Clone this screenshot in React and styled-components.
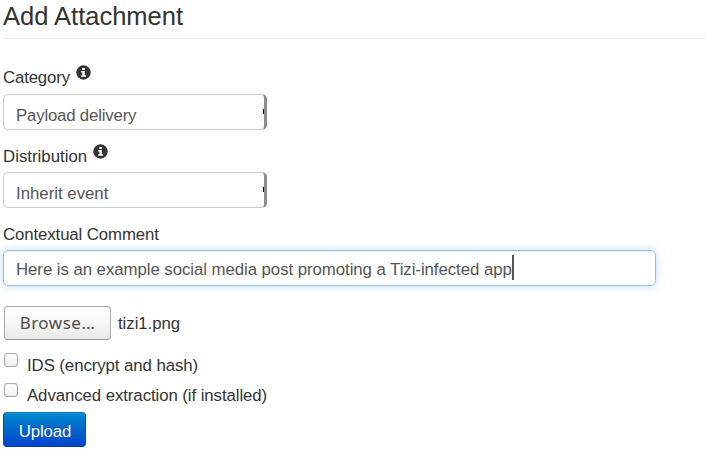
import React from "react";
import styled, { createGlobalStyle } from "styled-components";

const GlobalStyle = createGlobalStyle`
  * { box-sizing: border-box; }
  body { margin: 0; background: #fff; overflow: hidden; }
`;

const Page = styled.form`
  display: flex;
  flex-direction: column;
  align-items: flex-start;
  height: 471px;
  padding-left: 3px;
  font-family: "Liberation Sans", Arial, sans-serif;
  font-size: 16.8px;
  line-height: 24px;
  letter-spacing: -0.05px;
  color: #333;
  white-space: nowrap;
`;

const Legend = styled.h1`
  width: 100%;
  height: 39px;
  margin: 0 0 26px;
  border-bottom: 1px solid #e5e5e5;
  font-size: 25.5px;
  font-weight: 400;
  line-height: 33px;
  letter-spacing: 0;
`;

const Label = styled.label`
  display: flex;
  gap: 6px;
  height: 24px;
  margin-bottom: ${(p) => p.$gap}px;
  line-height: 26px;
`;

const LabelText = styled.span`
  letter-spacing: ${(p) => p.$tracking}px;
`;

const InfoIcon = styled.svg`
  width: 15px;
  height: 15px;
`;

const Select = styled.div`
  display: flex;
  align-items: center;
  justify-content: space-between;
  width: 264px;
  height: 36px;
  padding: 7px 0 0 12px;
  margin-bottom: ${(p) => p.$gap}px;
  border: 1px solid #ccc;
  border-right: 3px solid #8c8c8c;
  border-radius: 5px;
  color: #555;
`;

const SelectValue = styled.span`
  letter-spacing: ${(p) => p.$tracking}px;
`;

const ArrowEdge = styled.span`
  width: 1px;
  height: 5px;
  margin-bottom: 8px;
  background: #000;
`;

const CommentField = styled.div`
  display: flex;
  align-items: center;
  width: 653px;
  height: 36px;
  padding: 0 12px;
  margin-bottom: 20px;
  border: 1px solid #93c1e6;
  border-radius: 5px;
  box-shadow: inset 0 1px 1px rgba(0, 0, 0, 0.075), 0 0 9px rgba(82, 168, 236, 0.4);
  color: #555;
`;

const CommentText = styled.span`
  margin-top: 3px;
`;

const Caret = styled.span`
  width: 2px;
  height: 25px;
  margin-bottom: 1px;
  background: #555;
`;

const FileRow = styled.div`
  display: flex;
  align-items: center;
  gap: 7px;
  height: 34px;
  margin: 0 0 12px 1px;
`;

const FileName = styled.span`
  margin-top: 2px;
`;

const BrowseButton = styled.button`
  width: 107px;
  height: 34px;
  padding: 0 0 1px;
  border: 1px solid #aaa;
  border-bottom-color: #999;
  border-radius: 4px;
  background: linear-gradient(#fff, #f7f7f6 50%, #e9e8e6);
  font-family: "Noto Sans", sans-serif;
  font-size: 17px;
  letter-spacing: 0.5px;
  color: #4c4c4c;
`;

const CheckRow = styled.label`
  display: flex;
  gap: 9px;
  height: 30px;
  padding-left: 1px;
`;

const CheckBox = styled.span`
  width: 14px;
  height: 14px;
  margin-top: 1px;
  border: 1px solid #aaa;
  border-radius: 3px;
  background: linear-gradient(#fff, #f2f2f2);
  box-shadow: inset 0 0 1px #aaa;
`;

const CheckText = styled.span`
  margin-top: 2px;
  letter-spacing: -0.07px;
`;

const UploadButton = styled.button`
  width: 83px;
  height: 35px;
  padding: 4px 0 0 1px;
  border: 1px solid #0055b5;
  border-color: #0076bb #004fb5 #003ba0;
  border-radius: 4px;
  background: linear-gradient(#0088cc, #0044cc);
  box-shadow: inset 0 1px 0 rgba(255, 255, 255, 0.12);
  font: inherit;
  line-height: 24px;
  letter-spacing: -0.15px;
  color: #fff;
  text-shadow: 0 -1px 0 rgba(0, 0, 0, 0.25);
`;

function Info() {
  return (
    <InfoIcon viewBox="0 0 15 15" aria-label="Info">
      <circle cx="7.5" cy="7.5" r="7.2" fill="#333" />
      <path d="M6.2 2.9h2.6v2H6.2zM5.1 6h3.7v4.2H10v1.6H5.1v-1.6h1.2V7.6H5.1z" fill="#fff" />
    </InfoIcon>
  );
}

function SelectField({ label, value, gap, tracking }) {
  return (
    <>
      <Label $gap={gap[0]}>
        <LabelText $tracking={tracking[0]}>{label}</LabelText>
        <Info />
      </Label>
      <Select $gap={gap[1]}>
        <SelectValue $tracking={tracking[1]}>{value}</SelectValue>
        <ArrowEdge />
      </Select>
    </>
  );
}

export default function App() {
  return (
    <>
      <GlobalStyle />
      <Page>
        <Legend>Add Attachment</Legend>
        <SelectField label="Category" value="Payload delivery" gap={[5, 14]} tracking={[-0.15, -0.18]} />
        <SelectField label="Distribution" value="Inherit event" gap={[4, 14]} tracking={[0.02, 0]} />
        <Label $gap={4}>
          <LabelText $tracking={-0.1}>Contextual Comment</LabelText>
        </Label>
        <CommentField>
          <CommentText>Here is an example social media post promoting a Tizi-infected app</CommentText>
          <Caret />
        </CommentField>
        <FileRow>
          <BrowseButton type="button">Browse…</BrowseButton>
          <FileName>tizi1.png</FileName>
        </FileRow>
        <CheckRow>
          <CheckBox />
          <CheckText>IDS (encrypt and hash)</CheckText>
        </CheckRow>
        <CheckRow>
          <CheckBox />
          <CheckText>Advanced extraction (if installed)</CheckText>
        </CheckRow>
        <UploadButton type="button">Upload</UploadButton>
      </Page>
    </>
  );
}
